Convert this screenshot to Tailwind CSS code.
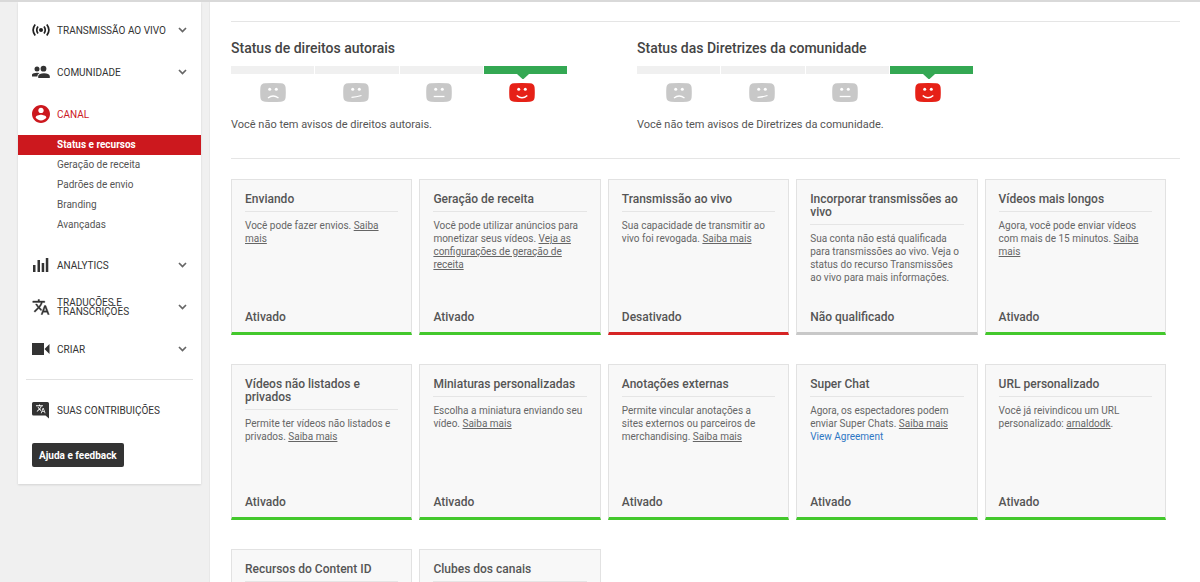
<!DOCTYPE html>
<html lang="pt-BR">
<head>
<meta charset="utf-8">
<meta name="viewport" content="width=device-width, initial-scale=1">
<title>Status e recursos</title>
<script src="https://cdn.jsdelivr.net/npm/@tailwindcss/browser@4"></script>
</head>
<body class="bg-white font-['Roboto',sans-serif] text-[#555]">
<svg class="hidden" aria-hidden="true">
  <symbol id="chevron" viewBox="0 0 9 6"><path d="M1 1l3.500 3.500L8 1" fill="none" stroke="#666" stroke-width="1.700"/></symbol>
  <symbol id="translate" viewBox="0 0 24 24"><path d="M12.870 15.070l-2.540-2.510.030-.030A17.520 17.520 0 0 0 14.070 6H17V4h-7V2H8v2H1v2h11.170C11.500 7.920 10.440 9.750 9 11.350 8.070 10.320 7.300 9.190 6.690 8h-2c.73 1.630 1.730 3.170 2.980 4.560l-5.090 5.020L4 19l5-5 3.110 3.110.76-2.040zM18.500 10h-2L12 22h2l1.120-3h4.750L21 22h2l-4.500-12zm-2.620 7l1.620-4.330L19.120 17h-3.240z"/></symbol>
  <symbol id="face-base" viewBox="0 0 26 19"><path d="M5 0.300Q13-.300 21 .300Q25.300.500 25.600 4.500Q26 9.500 25.600 14.500Q25.300 18.500 21 18.700Q13 19.300 5 18.700Q.700 18.500.400 14.500Q0 9.500.400 4.500Q.700.500 5 .300z" fill="currentColor"/><circle cx="9.700" cy="6.200" r="1.500" fill="#fff"/><circle cx="16.300" cy="6.200" r="1.500" fill="#fff"/></symbol>
  <symbol id="face-sad" viewBox="0 0 26 19"><use href="#face-base"/><path d="M8 15Q13 11 18.500 15" fill="none" stroke="#fff" stroke-width="1.300"/></symbol>
  <symbol id="face-unsure" viewBox="0 0 26 19"><use href="#face-base"/><path d="M8.500 14.300Q13 14.300 18.500 12.500" fill="none" stroke="#fff" stroke-width="1.300"/></symbol>
  <symbol id="face-neutral" viewBox="0 0 26 19"><use href="#face-base"/><path d="M7.700 13.500H18.500" fill="none" stroke="#fff" stroke-width="1.300"/></symbol>
  <symbol id="face-happy" viewBox="0 0 26 19"><use href="#face-base"/><path d="M7.700 12.500Q13 17.200 18.300 12.500" fill="none" stroke="#fff" stroke-width="1.400"/></symbol>
</svg>
<div class="flex h-screen overflow-hidden border-t-2 border-[#d9d9d9]">
  <aside class="w-[210px] shrink-0 bg-[#f0f0f0] border-r border-[#e8e8e8] pl-[18px] pr-2">
    <nav class="bg-white shadow-[0_1px_2px_rgba(0,0,0,0.12)] pt-[7px] pb-[17px] text-[10px] text-[#333]">
      <a href="#" class="flex h-[42px] items-center px-3.5">
        <svg class="w-[18px] h-[18px] mr-[7px]" viewBox="0 0 18 18" fill="none" stroke="#222" stroke-width="1.700"><circle cx="9" cy="9" r="2" fill="#222" stroke="none"/><path d="M6 5.500Q3.500 9 6 12.500M12 5.500Q14.500 9 12 12.500M3.200 3.500Q-1 9 3.200 14.500M14.800 3.500Q19 9 14.800 14.500"/></svg>
        <span class="flex-1">TRANSMISSÃO AO VIVO</span><svg class="w-[9px] h-1.5"><use href="#chevron"/></svg></a>
      <a href="#" class="flex h-[42px] items-center px-3.5">
        <svg class="w-[18px] h-[18px] mr-[7px]" viewBox="0 0 18 18" fill="#333"><circle cx="5" cy="6" r="2.500"/><circle cx="11.500" cy="5.700" r="2.900"/><path d="M0 13.500V11.500Q1 9.700 5 9.700Q6.500 9.700 7.500 10Q5.300 11.200 5.300 13.500zM6.200 15V13Q7 10.300 12 10.300Q17 10.300 17.800 13V15z"/></svg>
        <span class="flex-1">COMUNIDADE</span><svg class="w-[9px] h-1.5"><use href="#chevron"/></svg></a>
      <a href="#" class="flex h-[42px] items-center px-3.5 text-[#cc181e]">
        <svg class="w-[18px] h-[18px] mr-[7px]" viewBox="2 2 20 20" fill="#cc181e"><path d="M12 2C6.480 2 2 6.480 2 12s4.480 10 10 10 10-4.480 10-10S17.520 2 12 2zm0 3c1.660 0 3 1.340 3 3s-1.340 3-3 3-3-1.340-3-3 1.340-3 3-3zm0 14.200c-2.500 0-4.710-1.280-6-3.220.030-1.990 4-3.080 6-3.080 1.990 0 5.970 1.090 6 3.080-1.290 1.940-3.500 3.220-6 3.220z"/></svg>
        <span class="flex-1">CANAL</span></a>
      <ul class="mb-[9px] text-[10px] leading-5 text-[#555]">
        <li><a href="#" class="block bg-[#cc181e] pl-[39px] font-bold text-white">Status e recursos</a></li>
        <li><a href="#" class="block pl-[39px]">Geração de receita</a></li>
        <li><a href="#" class="block pl-[39px]">Padrões de envio</a></li>
        <li><a href="#" class="block pl-[39px]">Branding</a></li>
        <li><a href="#" class="block pl-[39px]">Avançadas</a></li>
      </ul>
      <a href="#" class="flex h-[42px] items-center px-3.5">
        <svg class="w-[18px] h-[18px] mr-[7px]" viewBox="0 0 18 18" fill="#333"><path d="M1 9h2.500v7H1zM5.500 4H8v12H5.500zM9.700 7h2.500v9H9.700zM13.800 2h2.500v14h-2.500z"/></svg>
        <span class="flex-1">ANALYTICS</span><svg class="w-[9px] h-1.5"><use href="#chevron"/></svg></a>
      <a href="#" class="flex h-[42px] items-center px-3.5">
        <svg class="w-[18px] h-[18px] mr-[7px]" fill="#333" stroke="#333" stroke-width=".5"><use href="#translate"/></svg>
        <span class="flex-1 leading-[9px]">TRADUÇÕES E<br>TRANSCRIÇÕES</span><svg class="w-[9px] h-1.5"><use href="#chevron"/></svg></a>
      <a href="#" class="flex h-[42px] items-center px-3.5">
        <svg class="w-[18px] h-[18px] mr-[7px]" viewBox="0 0 18 18" fill="#333"><path d="M0 3h12v12H0zM12.500 9L17.500 4V14z"/></svg>
        <span class="flex-1">CRIAR</span><svg class="w-[9px] h-1.5"><use href="#chevron"/></svg></a>
      <hr class="mx-2 my-[9px] border-[#e2e2e2]">
      <a href="#" class="flex h-[42px] items-center px-3.5">
        <svg class="w-[18px] h-[18px] mr-[7px]" viewBox="0 0 18 18" fill="#333"><path d="M1.500 1h14Q17 1 17 2.500V17.500L13.500 14.500H1.500Q0 14.500 0 13V2.500Q0 1 1.500 1z"/><use href="#translate" x="3.500" y="2.500" width="10.500" height="10.500" fill="#fff"/></svg>
        <span class="flex-1">SUAS CONTRIBUIÇÕES</span></a>
      <button type="button" class="ml-3.5 mt-3 block h-6 rounded-xs bg-[#333] px-[7px] text-[10px] font-bold text-white">Ajuda e feedback</button>
    </nav>
  </aside>
  <main class="flex-1 min-w-0 pl-[21px] pr-5 pt-[19px]">
    <div class="flex border-y border-[#e5e5e5] h-[138px] pt-4">
      <section class="w-[336px] mr-[70px]">
        <h2 class="text-sm leading-5 font-medium text-[#444]">Status de direitos autorais</h2>
        <div class="mt-2 grid grid-cols-4 gap-px">
          <div class="h-2 bg-[#f0f0f0]"></div><div class="h-2 bg-[#f0f0f0]"></div><div class="h-2 bg-[#f0f0f0]"></div>
          <div class="relative h-2 bg-[#34a853]"><svg class="absolute left-[33px] top-2 h-[5px] w-3" viewBox="0 0 12 5"><path d="M0 0H12L6 5.500z" fill="#34a853"/></svg></div>
        </div>
        <div class="mt-[9px] grid grid-cols-4 justify-items-center pr-1 text-[#c8c8c8]">
          <svg class="w-[26px] h-[19px]"><use href="#face-sad"/></svg><svg class="w-[26px] h-[19px]"><use href="#face-unsure"/></svg><svg class="w-[26px] h-[19px]"><use href="#face-neutral"/></svg><svg class="w-[26px] h-[19px] text-[#e62117]"><use href="#face-happy"/></svg>
        </div>
        <p class="mt-[15px] text-[11px] leading-4">Você não tem avisos de direitos autorais.</p>
      </section>
      <section class="w-[336px]">
        <h2 class="text-sm leading-5 font-medium text-[#444]">Status das Diretrizes da comunidade</h2>
        <div class="mt-2 grid grid-cols-4 gap-px">
          <div class="h-2 bg-[#f0f0f0]"></div><div class="h-2 bg-[#f0f0f0]"></div><div class="h-2 bg-[#f0f0f0]"></div>
          <div class="relative h-2 bg-[#34a853]"><svg class="absolute left-[33px] top-2 h-[5px] w-3" viewBox="0 0 12 5"><path d="M0 0H12L6 5.500z" fill="#34a853"/></svg></div>
        </div>
        <div class="mt-[9px] grid grid-cols-4 justify-items-center pr-1 text-[#c8c8c8]">
          <svg class="w-[26px] h-[19px]"><use href="#face-sad"/></svg><svg class="w-[26px] h-[19px]"><use href="#face-unsure"/></svg><svg class="w-[26px] h-[19px]"><use href="#face-neutral"/></svg><svg class="w-[26px] h-[19px] text-[#e62117]"><use href="#face-happy"/></svg>
        </div>
        <p class="mt-[15px] text-[11px] leading-4">Você não tem avisos de Diretrizes da comunidade.</p>
      </section>
    </div>
    <div class="mt-5 mr-3.5 grid grid-cols-5 gap-x-[7px] gap-y-[29px] text-[10px] leading-[13px] text-[#666]">
      <article class="flex min-h-[156px] flex-col border border-b-[3px] border-[#e2e2e2] border-b-[#43c82c] bg-[#f8f8f8] px-[13px] pb-[7px] pt-[13px]">
        <h3 class="border-b border-[#e5e5e5] pb-[5px] text-xs leading-[13px] font-medium text-[#555]">Enviando</h3>
        <p class="mt-[7px]">Você pode fazer envios. <a href="#" class="underline">Saiba mais</a></p>
        <p class="mt-auto text-xs font-medium text-[#555]">Ativado</p>
      </article>
      <article class="flex min-h-[156px] flex-col border border-b-[3px] border-[#e2e2e2] border-b-[#43c82c] bg-[#f8f8f8] px-[13px] pb-[7px] pt-[13px]">
        <h3 class="border-b border-[#e5e5e5] pb-[5px] text-xs leading-[13px] font-medium text-[#555]">Geração de receita</h3>
        <p class="mt-[7px]">Você pode utilizar anúncios para monetizar seus vídeos. <a href="#" class="underline">Veja as configurações de geração de receita</a></p>
        <p class="mt-auto text-xs font-medium text-[#555]">Ativado</p>
      </article>
      <article class="flex min-h-[156px] flex-col border border-b-[3px] border-[#e2e2e2] border-b-[#d62424] bg-[#f8f8f8] px-[13px] pb-[7px] pt-[13px]">
        <h3 class="border-b border-[#e5e5e5] pb-[5px] text-xs leading-[13px] font-medium text-[#555]">Transmissão ao vivo</h3>
        <p class="mt-[7px]">Sua capacidade de transmitir ao vivo foi revogada. <a href="#" class="underline">Saiba mais</a></p>
        <p class="mt-auto text-xs font-medium text-[#555]">Desativado</p>
      </article>
      <article class="flex min-h-[156px] flex-col border border-b-[3px] border-[#e2e2e2] border-b-[#c8c8c8] bg-[#f8f8f8] px-[13px] pb-[7px] pt-[13px]">
        <h3 class="border-b border-[#e5e5e5] pb-[5px] text-xs leading-[13px] font-medium text-[#555]">Incorporar transmissões ao vivo</h3>
        <p class="mt-[7px]">Sua conta não está qualificada para transmissões ao vivo. Veja o status do recurso Transmissões ao vivo para mais informações.</p>
        <p class="mt-auto text-xs font-medium text-[#555]">Não qualificado</p>
      </article>
      <article class="flex min-h-[156px] flex-col border border-b-[3px] border-[#e2e2e2] border-b-[#43c82c] bg-[#f8f8f8] px-[13px] pb-[7px] pt-[13px]">
        <h3 class="border-b border-[#e5e5e5] pb-[5px] text-xs leading-[13px] font-medium text-[#555]">Vídeos mais longos</h3>
        <p class="mt-[7px]">Agora, você pode enviar vídeos com mais de 15 minutos. <a href="#" class="underline">Saiba mais</a></p>
        <p class="mt-auto text-xs font-medium text-[#555]">Ativado</p>
      </article>
      <article class="flex min-h-[156px] flex-col border border-b-[3px] border-[#e2e2e2] border-b-[#43c82c] bg-[#f8f8f8] px-[13px] pb-[7px] pt-[13px]">
        <h3 class="border-b border-[#e5e5e5] pb-[5px] text-xs leading-[13px] font-medium text-[#555]">Vídeos não listados e privados</h3>
        <p class="mt-[7px]">Permite ter vídeos não listados e privados. <a href="#" class="underline">Saiba mais</a></p>
        <p class="mt-auto text-xs font-medium text-[#555]">Ativado</p>
      </article>
      <article class="flex min-h-[156px] flex-col border border-b-[3px] border-[#e2e2e2] border-b-[#43c82c] bg-[#f8f8f8] px-[13px] pb-[7px] pt-[13px]">
        <h3 class="border-b border-[#e5e5e5] pb-[5px] text-xs leading-[13px] font-medium text-[#555]">Miniaturas personalizadas</h3>
        <p class="mt-[7px]">Escolha a miniatura enviando seu vídeo. <a href="#" class="underline">Saiba mais</a></p>
        <p class="mt-auto text-xs font-medium text-[#555]">Ativado</p>
      </article>
      <article class="flex min-h-[156px] flex-col border border-b-[3px] border-[#e2e2e2] border-b-[#43c82c] bg-[#f8f8f8] px-[13px] pb-[7px] pt-[13px]">
        <h3 class="border-b border-[#e5e5e5] pb-[5px] text-xs leading-[13px] font-medium text-[#555]">Anotações externas</h3>
        <p class="mt-[7px]">Permite vincular anotações a<br>sites externos ou parceiros de merchandising. <a href="#" class="underline">Saiba mais</a></p>
        <p class="mt-auto text-xs font-medium text-[#555]">Ativado</p>
      </article>
      <article class="flex min-h-[156px] flex-col border border-b-[3px] border-[#e2e2e2] border-b-[#43c82c] bg-[#f8f8f8] px-[13px] pb-[7px] pt-[13px]">
        <h3 class="border-b border-[#e5e5e5] pb-[5px] text-xs leading-[13px] font-medium text-[#555]">Super Chat</h3>
        <p class="mt-[7px]">Agora, os espectadores podem enviar Super Chats. <a href="#" class="underline">Saiba mais</a><br><a href="#" class="text-[#2f77c4]">View Agreement</a></p>
        <p class="mt-auto text-xs font-medium text-[#555]">Ativado</p>
      </article>
      <article class="flex min-h-[156px] flex-col border border-b-[3px] border-[#e2e2e2] border-b-[#43c82c] bg-[#f8f8f8] px-[13px] pb-[7px] pt-[13px]">
        <h3 class="border-b border-[#e5e5e5] pb-[5px] text-xs leading-[13px] font-medium text-[#555]">URL personalizado</h3>
        <p class="mt-[7px]">Você já reivindicou um URL<br>personalizado: <a href="#" class="underline">arnaldodk</a>.</p>
        <p class="mt-auto text-xs font-medium text-[#555]">Ativado</p>
      </article>
      <article class="flex min-h-[156px] flex-col border border-b-[3px] border-[#e2e2e2] border-b-[#43c82c] bg-[#f8f8f8] px-[13px] pb-[7px] pt-[13px]">
        <h3 class="border-b border-[#e5e5e5] pb-[5px] text-xs leading-[13px] font-medium text-[#555]">Recursos do Content ID</h3>
      </article>
      <article class="flex min-h-[156px] flex-col border border-b-[3px] border-[#e2e2e2] border-b-[#43c82c] bg-[#f8f8f8] px-[13px] pb-[7px] pt-[13px]">
        <h3 class="border-b border-[#e5e5e5] pb-[5px] text-xs leading-[13px] font-medium text-[#555]">Clubes dos canais</h3>
      </article>
    </div>
  </main>
</div>
</body>
</html>
